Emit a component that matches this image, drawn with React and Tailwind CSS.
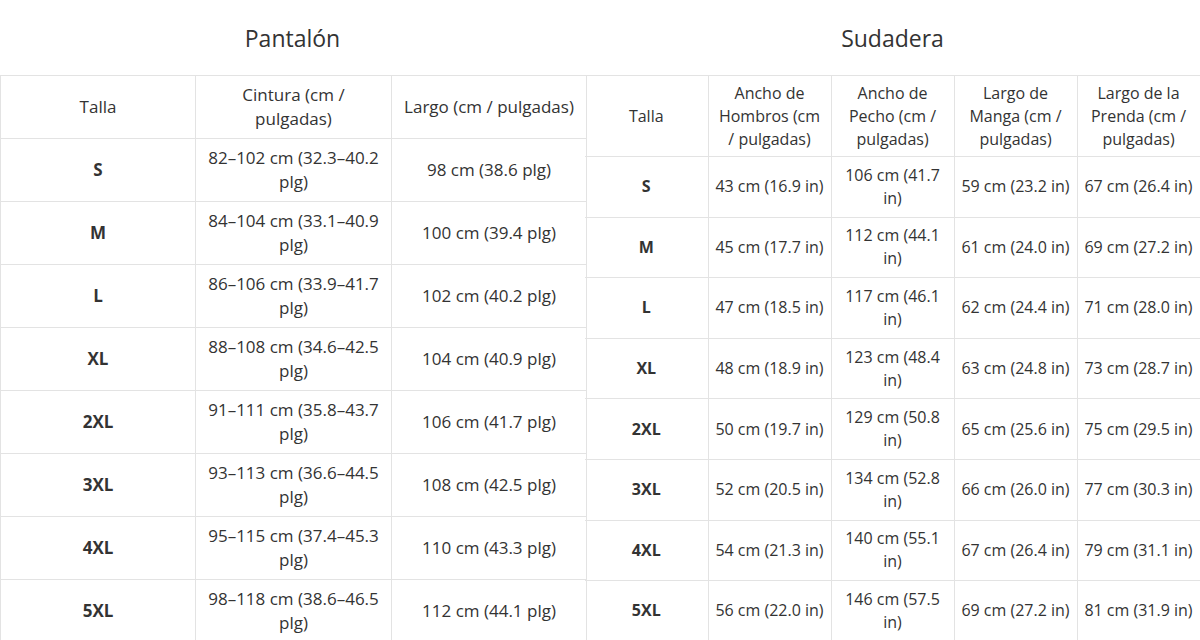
import React from "react";

const pants = [
  ["S", "82–102 cm (32.3–40.2 plg)", "98 cm (38.6 plg)"],
  ["M", "84–104 cm (33.1–40.9 plg)", "100 cm (39.4 plg)"],
  ["L", "86–106 cm (33.9–41.7 plg)", "102 cm (40.2 plg)"],
  ["XL", "88–108 cm (34.6–42.5 plg)", "104 cm (40.9 plg)"],
  ["2XL", "91–111 cm (35.8–43.7 plg)", "106 cm (41.7 plg)"],
  ["3XL", "93–113 cm (36.6–44.5 plg)", "108 cm (42.5 plg)"],
  ["4XL", "95–115 cm (37.4–45.3 plg)", "110 cm (43.3 plg)"],
  ["5XL", "98–118 cm (38.6–46.5 plg)", "112 cm (44.1 plg)"],
];

const hoodie = [
  ["S", "43 cm (16.9 in)", "106 cm (41.7 in)", "59 cm (23.2 in)", "67 cm (26.4 in)"],
  ["M", "45 cm (17.7 in)", "112 cm (44.1 in)", "61 cm (24.0 in)", "69 cm (27.2 in)"],
  ["L", "47 cm (18.5 in)", "117 cm (46.1 in)", "62 cm (24.4 in)", "71 cm (28.0 in)"],
  ["XL", "48 cm (18.9 in)", "123 cm (48.4 in)", "63 cm (24.8 in)", "73 cm (28.7 in)"],
  ["2XL", "50 cm (19.7 in)", "129 cm (50.8 in)", "65 cm (25.6 in)", "75 cm (29.5 in)"],
  ["3XL", "52 cm (20.5 in)", "134 cm (52.8 in)", "66 cm (26.0 in)", "77 cm (30.3 in)"],
  ["4XL", "54 cm (21.3 in)", "140 cm (55.1 in)", "67 cm (26.4 in)", "79 cm (31.1 in)"],
  ["5XL", "56 cm (22.0 in)", "146 cm (57.5 in)", "69 cm (27.2 in)", "81 cm (31.9 in)"],
];

const cell = "border border-[#e3e3e3] px-[6px] py-0 text-center align-middle font-normal";

export default function App() {
  return (
    <div className="w-[1200px] h-[640px] overflow-hidden bg-white text-[#333] font-['Open_Sans',sans-serif] flex items-start">

      {/* ── Pantalón ── */}
      <div className="w-[585px] shrink-0 flex flex-col text-[17px] leading-[24px]">
        <div className="h-[75px] shrink-0 flex items-center justify-center text-[23px] pt-[1px]">Pantalón</div>
        <table className="table-fixed border-collapse w-[586px]">
          <colgroup>
            <col className="w-[195px]" />
            <col className="w-[196px]" />
            <col className="w-[195px]" />
          </colgroup>
          <thead>
            <tr className="h-[63px]">
              <th className={cell}>Talla</th>
              <th className={cell}>Cintura (cm / pulgadas)</th>
              <th className={cell}>Largo (cm / pulgadas)</th>
            </tr>
          </thead>
          <tbody>
            {pants.map((r) => (
              <tr key={r[0]} className="h-[63px]">
                <td className={cell + " !font-bold"}>{r[0]}</td>
                <td className={cell}>{r[1]}</td>
                <td className={cell}>{r[2]}</td>
              </tr>
            ))}
          </tbody>
        </table>
      </div>

      {/* ── Sudadera ── */}
      <div className="w-[615px] shrink-0 flex flex-col text-[16px] leading-[23px]">
        <div className="h-[75px] shrink-0 flex items-center justify-center text-[23px] pt-[1px]">Sudadera</div>
        <table className="table-fixed border-collapse w-[615px]">
          <colgroup>
            <col className="w-[123px]" />
            <col className="w-[123px]" />
            <col className="w-[123px]" />
            <col className="w-[123px]" />
            <col className="w-[123px]" />
          </colgroup>
          <thead>
            <tr className="h-[81px]">
              <th className={cell + " border-l-0"}>Talla</th>
              <th className={cell}>Ancho de Hombros (cm / pulgadas)</th>
              <th className={cell}>Ancho de Pecho (cm / pulgadas)</th>
              <th className={cell}>Largo de Manga (cm / pulgadas)</th>
              <th className={cell}>Largo de la Prenda (cm / pulgadas)</th>
            </tr>
          </thead>
          <tbody>
            {hoodie.map((r) => (
              <tr key={r[0]} className="h-[60.6px]">
                <td className={cell + " border-l-0 !font-bold"}>{r[0]}</td>
                <td className={cell}>{r[1]}</td>
                <td className={cell}>{r[2]}</td>
                <td className={cell}>{r[3]}</td>
                <td className={cell}>{r[4]}</td>
              </tr>
            ))}
          </tbody>
        </table>
      </div>
    </div>
  );
}
